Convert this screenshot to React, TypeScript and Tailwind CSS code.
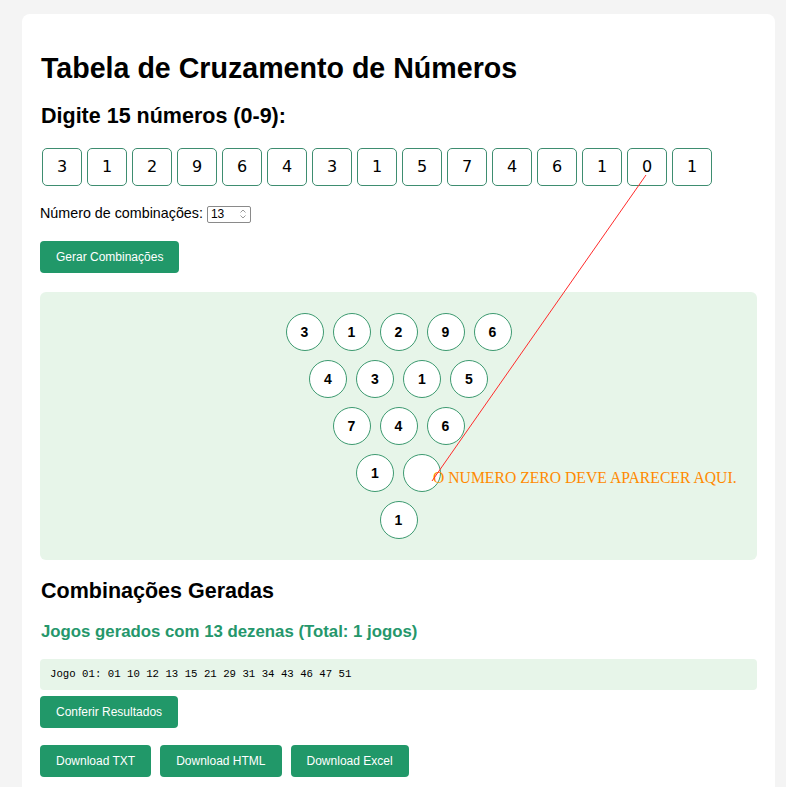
import React from "react";

const digits = [3, 1, 2, 9, 6, 4, 3, 1, 5, 7, 4, 6, 1, 0, 1];
const rows: (number | null)[][] = [
  [3, 1, 2, 9, 6],
  [4, 3, 1, 5],
  [7, 4, 6],
  [1, null],
  [1],
];

function Btn({ children }: { children: React.ReactNode }) {
  return (
    <button className="h-[32px] px-[16px] rounded-[4px] bg-[#219869] text-white text-[12px] leading-none [font-family:'Liberation_Sans',Arial,sans-serif]">
      {children}
    </button>
  );
}

export default function App() {
  return (
    <div className="min-h-[787px] bg-[#f4f4f4] pt-[14px] pl-[22px] pr-[11px] [font-family:'Liberation_Sans',Arial,sans-serif]">
      <div className="relative bg-white rounded-[8px] w-[753px] px-[18px] pt-[38px] pb-[20px] flex flex-col items-start">
        <h1 className="text-[28.6px] leading-[32px] font-bold text-black ml-[1px]">
          Tabela de Cruzamento de Números
        </h1>
        <h2 className="mt-[20px] text-[21.5px] leading-[24px] font-bold text-black ml-[1px]">
          Digite 15 números (0-9):
        </h2>
        <div className="mt-[20px] ml-[2px] flex gap-[5px]">
          {digits.map((d, i) => (
            <div
              key={i}
              className="w-[40px] h-[38px] rounded-[5px] border border-[#3e8d70] flex items-center justify-center text-[16px] text-black [font-family:'DejaVu_Sans',Verdana,sans-serif]"
            >
              {d}
            </div>
          ))}
        </div>
        <div className="mt-[20px] h-[16px] flex items-center text-[14.3px] text-black">
          <span>Número de combinações:</span>
          <span className="ml-[4px] w-[44px] h-[17px] border border-[#8a8a8a] rounded-[2px] flex items-center justify-between pl-[3px] pr-[3px] text-[12px]">
            <span>13</span>
            <svg width="8" height="12" viewBox="0 0 8 12" fill="none" stroke="#9a9a9a" strokeWidth="1">
              <path d="M1.5 4.5 L4 2 L6.5 4.5" />
              <path d="M1.5 7.5 L4 10 L6.5 7.5" />
            </svg>
          </span>
        </div>
        <div className="mt-[19px]">
          <Btn>Gerar Combinações</Btn>
        </div>
        <div className="mt-[19px] w-[717px] h-[268px] rounded-[6px] bg-[#e7f5e9] pt-[21px] flex flex-col items-center gap-[9px]">
          {rows.map((r, ri) => (
            <div key={ri} className="flex gap-[9px]">
              {r.map((n, ci) => (
                <div
                  key={ci}
                  className="w-[38px] h-[38px] rounded-full bg-white border border-[#3d9a70] flex items-center justify-center text-[14px] font-bold text-black"
                >
                  {n === null ? "" : n}
                </div>
              ))}
            </div>
          ))}
        </div>
        <h2 className="mt-[19px] text-[21.5px] leading-[24px] font-bold text-black ml-[1px]">
          Combinações Geradas
        </h2>
        <h3 className="mt-[19px] text-[16.8px] leading-[20px] font-bold text-[#25976b] ml-[1px]">
          Jogos gerados com 13 dezenas (Total: 1 jogos)
        </h3>
        <div className="mt-[17px] w-[717px] h-[31px] rounded-[4px] bg-[#e7f5e9] flex items-center pl-[10px] text-[10.7px] text-black [font-family:'Liberation_Mono','Courier_New',monospace]">
          Jogo 01: 01 10 12 13 15 21 29 31 34 43 46 47 51
        </div>
        <div className="mt-[6px]">
          <Btn>Conferir Resultados</Btn>
        </div>
        <div className="mt-[17px] flex gap-[9px]">
          <Btn>Download TXT</Btn>
          <Btn>Download HTML</Btn>
          <Btn>Download Excel</Btn>
        </div>

        <span className="absolute left-[411px] top-[455px] text-[15.7px] leading-[18px] text-[#ff8a00] whitespace-nowrap [font-family:'Liberation_Serif','Times_New_Roman',serif]">
          O NUMERO ZERO DEVE APARECER AQUI.
        </span>
        <svg className="absolute left-0 top-0 pointer-events-none" width="753" height="780">
          <line x1="624" y1="161" x2="410" y2="467" stroke="#ff2a2a" strokeWidth="1" />
        </svg>
      </div>
    </div>
  );
}
